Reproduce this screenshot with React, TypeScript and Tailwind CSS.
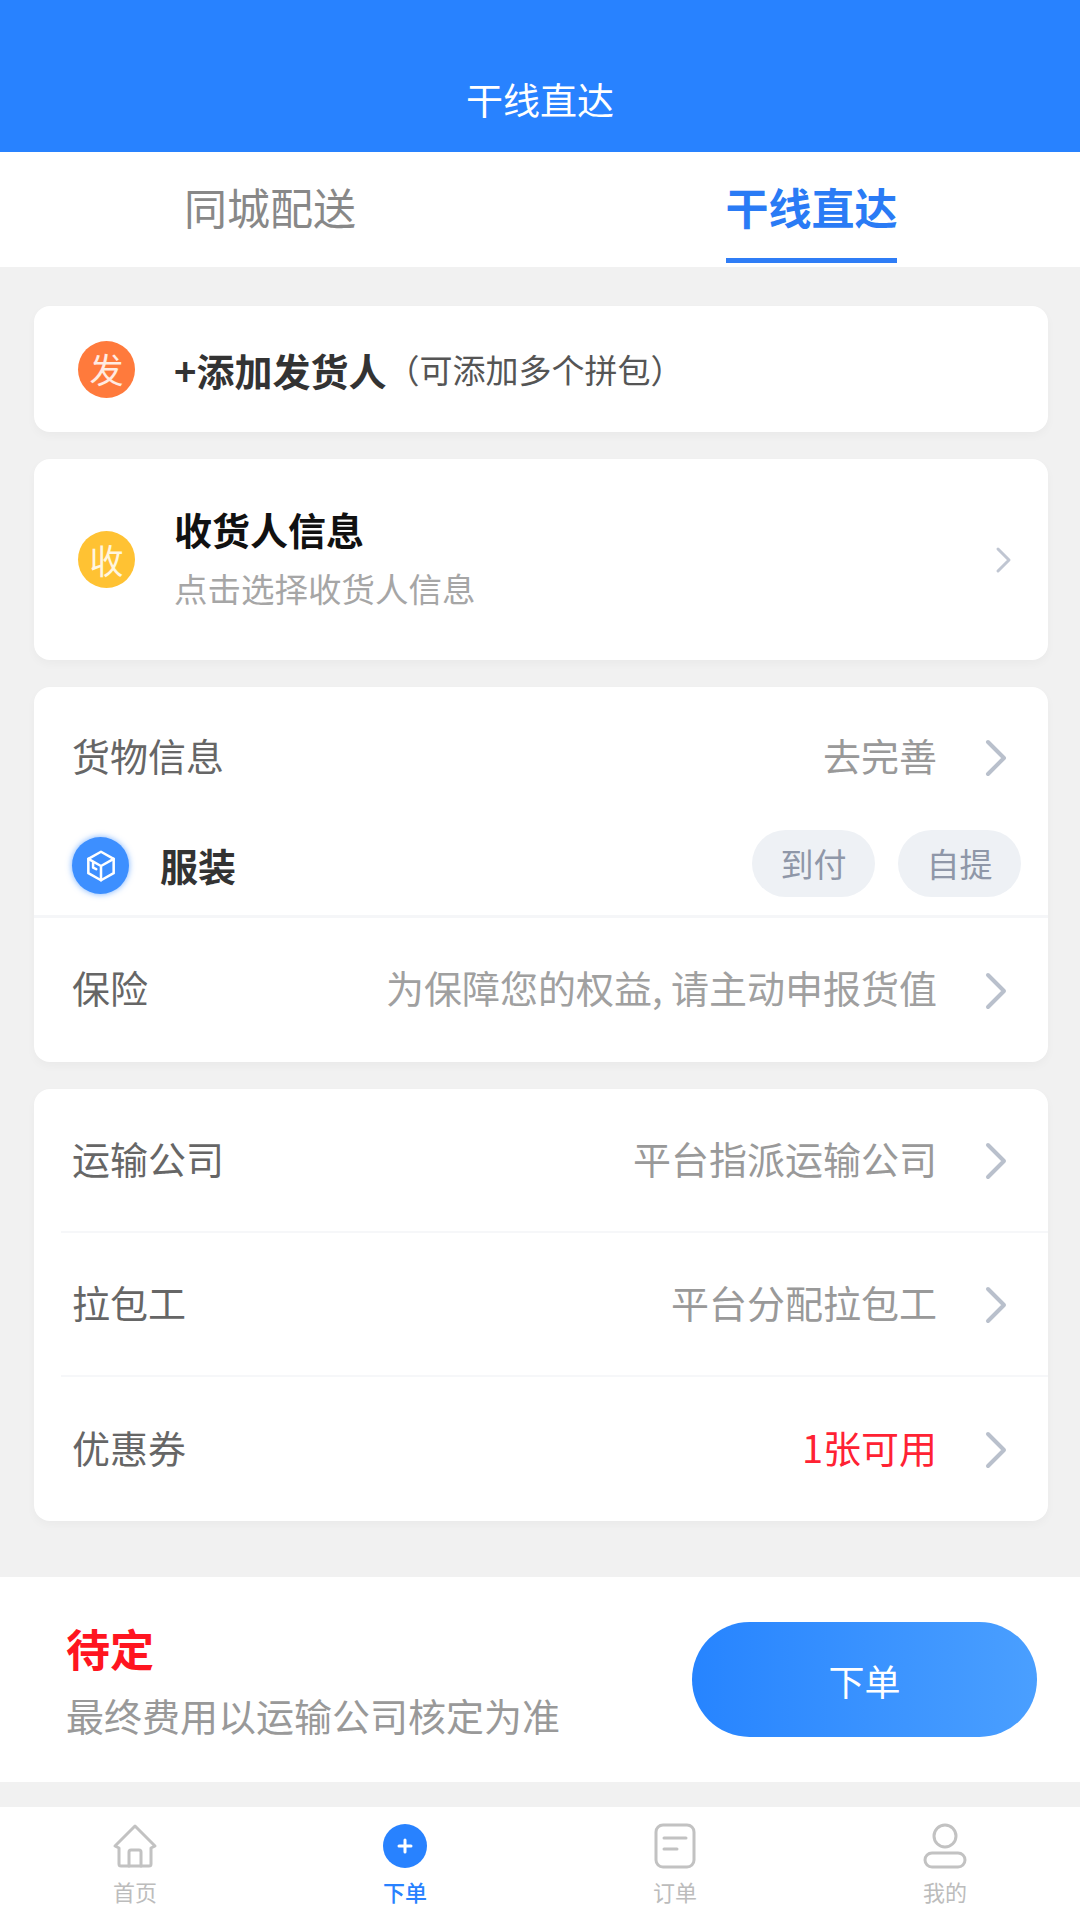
import type { ReactNode } from 'react';

const FONT = 'font-["Noto_Sans_CJK_SC","Noto_Sans",sans-serif]';

function Arrow() {
  return (
    <svg viewBox="0 0 22 38" fill="none" stroke="#b9c0cc" strokeWidth="4" strokeLinecap="round" strokeLinejoin="round" className="mt-[2px] h-[38px] w-[22px] shrink-0">
      <path d="M3 3l16 16L3 35" />
    </svg>
  );
}

function Row({ label, value, valueClass = 'text-[#999999]', last }: { label: string; value: string; valueClass?: string; last?: boolean }) {
  return (
    <div className={`ml-[27px] flex h-[144px] items-center pr-[41px] ${last ? '' : 'border-b-2 border-[#f6f7f9]'}`}>
      <span className="ml-[11px] pb-[6px] text-[38px] text-[#666666]">{label}</span>
      <span className={`ml-auto mr-[48px] pb-[6px] text-[38px] ${valueClass}`}>{value}</span>
      <Arrow />
    </div>
  );
}

function Badge({ text, color }: { text: string; color: string }) {
  return (
    <span className={`flex h-[57px] w-[57px] shrink-0 items-center justify-center rounded-full text-[34px] leading-none text-white/85 ${color}`}>
      {text}
    </span>
  );
}

function Pill({ children }: { children: ReactNode }) {
  return (
    <span className="flex h-[67px] w-[123px] items-center justify-center rounded-full bg-[#eef1f5] text-[33px] text-[#8f97a8]">
      {children}
    </span>
  );
}

function TabItem({ label, active, children }: { label: string; active?: boolean; children: ReactNode }) {
  return (
    <div className="flex flex-col items-center">
      <div className="h-[48px] w-[48px]">{children}</div>
      <span className={`mt-[5px] text-[22px] leading-[32px] ${active ? 'font-medium text-[#2882ff]' : 'text-[#bcbcbc]'}`}>{label}</span>
    </div>
  );
}

export default function App() {
  return (
    <div className={`flex h-[1920px] w-[1080px] flex-col overflow-hidden bg-[#f1f1f1] ${FONT}`}>
      <header className="flex h-[152px] items-end justify-center bg-[#2882ff] pb-[26px]">
        <h1 className="text-[37px] leading-[54px] font-normal text-white">干线直达</h1>
      </header>

      <nav className="grid h-[115px] grid-cols-2 bg-white">
        <div className="flex justify-center pt-[26px]">
          <span className="text-[43px] leading-[56px] text-[#888888]">同城配送</span>
        </div>
        <div className="flex justify-center pt-[26px]">
          <span className="ml-[2px] h-[85px] w-[171px] border-b-[5px] border-[#2f7df6] text-center text-[43px] leading-[56px] font-bold whitespace-nowrap text-[#2a7bf5]">干线直达</span>
        </div>
      </nav>

      <main className="mt-[39px] flex flex-col gap-[27px] pl-[34px] pr-[32px]">
        <section className="flex h-[126px] items-center rounded-[16px] bg-white pl-[44px] shadow-[0_4px_10px_rgba(0,0,0,0.03)]">
          <Badge text="发" color="bg-[#ff7a3c]" />
          <span className="ml-[39px] text-[38px] font-bold text-[#333333]">+添加发货人</span>
          <span className="mt-[2px] text-[33px] text-[#555555]">（可添加多个拼包）</span>
        </section>

        <section className="flex h-[201px] items-center rounded-[16px] bg-white pl-[44px] pr-[36px] shadow-[0_4px_10px_rgba(0,0,0,0.03)]">
          <Badge text="收" color="bg-[#ffc233]" />
          <div className="ml-[39px] flex flex-col pb-[3px]">
            <span className="text-[38px] leading-[56px] font-bold text-[#111111]">收货人信息</span>
            <span className="mt-[3px] text-[33.5px] leading-[56px] text-[#a6a6a6]">点击选择收货人信息</span>
          </div>
          <svg viewBox="0 0 17 28" fill="none" stroke="#c0c6d2" strokeWidth="3" strokeLinecap="round" strokeLinejoin="round" className="ml-auto h-[28px] w-[17px] shrink-0">
            <path d="M3 3l11 11L3 25" />
          </svg>
        </section>

        <section className="h-[375px] rounded-[16px] bg-white shadow-[0_4px_10px_rgba(0,0,0,0.03)]">
          <div className="flex h-[140px] items-center pl-[38px] pr-[41px]">
            <span className="pb-[5px] text-[38px] text-[#666666]">货物信息</span>
            <span className="ml-auto mr-[48px] pb-[5px] text-[38px] text-[#999999]">去完善</span>
            <Arrow />
          </div>
          <div className="flex h-[91px] items-start border-b-[3px] border-[#f5f6f8] pl-[38px] pr-[27px]">
            <span className="mt-[10px] flex h-[57px] w-[57px] items-center justify-center rounded-full bg-[#3d8fff] shadow-[0_0_6px_rgba(61,143,255,0.7)]">
              <svg viewBox="0 0 24 24" className="h-[38px] w-[38px]" fill="none" stroke="white" strokeWidth="1.6" strokeLinejoin="round" strokeLinecap="round">
                <path d="M12 3l8 4.5v9L12 21l-8-4.5v-9z" />
                <path d="M4 7.5l8 4.5 8-4.5M12 12v9M7 9.5v3.5l2 1" />
              </svg>
            </span>
            <span className="ml-[31px] mt-[9px] text-[38px] leading-[57px] font-bold text-[#333333]">服装</span>
            <div className="mt-[3px] ml-auto flex gap-[23px]">
              <Pill>到付</Pill>
              <Pill>自提</Pill>
            </div>
          </div>
          <div className="flex h-[144px] items-center pl-[38px] pr-[41px]">
            <span className="pb-[8px] text-[38px] text-[#666666]">保险</span>
            <span className="ml-auto mr-[48px] pb-[8px] text-[38px] text-[#a0a0a0]">为保障您的权益, 请主动申报货值</span>
            <Arrow />
          </div>
        </section>

        <section className="rounded-[16px] bg-white shadow-[0_4px_10px_rgba(0,0,0,0.03)]">
          <Row label="运输公司" value="平台指派运输公司" />
          <Row label="拉包工" value="平台分配拉包工" />
          <Row label="优惠券" value="1张可用" valueClass="text-[#ff2233]" last />
        </section>
      </main>

      <section className="mt-[56px] flex h-[205px] items-center justify-between bg-white pl-[66px] pr-[43px]">
        <div className="flex flex-col">
          <span className="text-[44px] leading-[64px] font-bold text-[#ff1520]">待定</span>
          <span className="mt-[7px] text-[38px] leading-[56px] text-[#999999]">最终费用以运输公司核定为准</span>
        </div>
        <button className="h-[115px] w-[345px] rounded-full bg-gradient-to-r from-[#2684ff] to-[#4a9fff] text-[36px] text-white">下单</button>
      </section>

      <footer className="mt-[25px] grid flex-1 grid-cols-4 items-start bg-white pt-[15px]">
        <TabItem label="首页">
          <svg viewBox="0 0 48 48" fill="none" stroke="#c2c2c2" strokeWidth="3" strokeLinejoin="round" strokeLinecap="round" className="h-full w-full">
            <path d="M4 24L24 4l20 20-4 2v16a2 2 0 0 1-2 2H10a2 2 0 0 1-2-2V26z" />
            <path d="M18 44V30a2 2 0 0 1 2-2h8a2 2 0 0 1 2 2v14" />
          </svg>
        </TabItem>
        <TabItem label="下单" active>
          <svg viewBox="0 0 48 48" className="h-full w-full">
            <circle cx="24" cy="24" r="22" fill="#2882ff" />
            <path d="M24 18v12M18 24h12" stroke="white" strokeWidth="3" strokeLinecap="round" />
          </svg>
        </TabItem>
        <TabItem label="订单">
          <svg viewBox="0 0 48 48" fill="none" stroke="#c2c2c2" strokeWidth="3" strokeLinecap="round" className="h-full w-full">
            <rect x="5" y="3" width="38" height="42" rx="7" />
            <path d="M13 16h22M13 27h13" />
          </svg>
        </TabItem>
        <TabItem label="我的">
          <svg viewBox="0 0 48 48" fill="none" stroke="#c2c2c2" strokeWidth="3" className="h-full w-full">
            <circle cx="24" cy="14" r="11" />
            <rect x="4" y="31" width="40" height="14" rx="7" />
          </svg>
        </TabItem>
      </footer>
    </div>
  );
}
